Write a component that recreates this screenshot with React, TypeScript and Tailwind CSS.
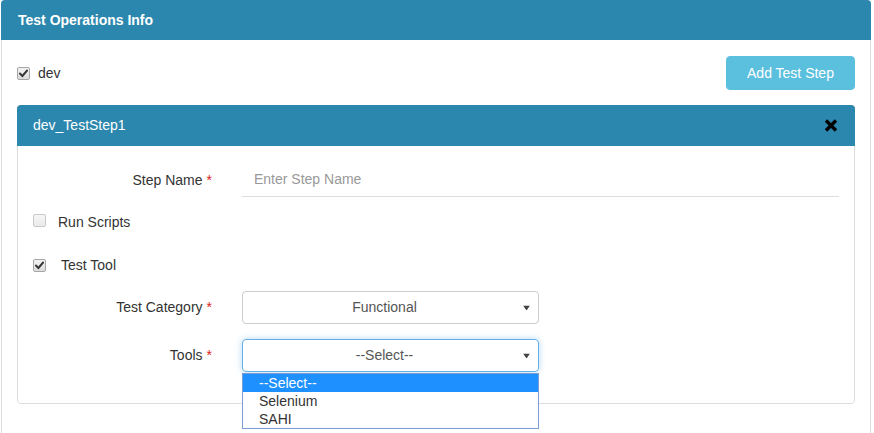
import React from "react";

const Check = ({ checked }: { checked: boolean }) => (
  <span className="inline-flex h-[13px] w-[13px] items-center justify-center rounded-[2px] border border-[#a6a6a6] bg-gradient-to-b from-[#f2f2f2] to-[#dcdcdc]">
    {checked && (
      <svg width="9" height="9" viewBox="0 0 9 9">
        <path d="M1 4.6 L3.4 7 L8 1.6" stroke="#333" strokeWidth="2" fill="none" strokeLinecap="square" />
      </svg>
    )}
  </span>
);

const Arrow = () => (
  <svg width="7" height="5" viewBox="0 0 7 5" className="absolute right-[8px] top-1/2 -translate-y-1/2">
    <path d="M0 0 L7 0 L3.5 5 Z" fill="#444" />
  </svg>
);

const Req = () => <span className="ml-[4px] text-[#e02020]">*</span>;

export default function App() {
  return (
    <div className="min-h-[433px] bg-white pl-px text-[14px] text-[#333]" style={{ fontFamily: '"Liberation Sans", Arial, sans-serif' }}>
      <div className="w-[870px] rounded-t-[4px] border border-t-0 border-[#ddd]">
        <div className="-mx-px flex h-[40px] items-center rounded-t-[4px] bg-[#2b87ad] pl-[17px] font-bold text-white">
          Test Operations Info
        </div>
        <div className="px-[15px] pt-[16px]">
          <div className="flex h-[34px] items-center justify-between">
            <div className="flex items-center">
              <Check checked />
              <span className="ml-[8px]">dev</span>
            </div>
            <button className="h-[34px] w-[129px] rounded-[4px] border border-[#5bc0de] bg-[#5bc0de] text-white">
              Add Test Step
            </button>
          </div>
          <div className="mt-[15px] rounded-[4px] border border-[#ddd]">
            <div className="-mx-px -mt-px flex h-[41px] items-center justify-between rounded-t-[4px] bg-[#2b87ad] pl-[16px] pr-[17px] text-white">
              <span>dev_TestStep1</span>
              <svg width="14" height="13" viewBox="0 0 14 13">
                <path d="M2 1.5 L12 11.5 M12 1.5 L2 11.5" stroke="#000" strokeWidth="3.4" strokeLinecap="butt" />
              </svg>
            </div>
            <div className="px-[15px] pb-[31px] pt-[17px]">
              <div className="flex h-[34px] items-center">
                <label className="w-[179px] text-right">
                  Step Name<Req />
                </label>
                <div className="ml-[30px] flex h-[34px] flex-1 items-center border-b border-[#ddd] pl-[12px] text-[#999]">
                  Enter Step Name
                </div>
              </div>
              <div className="mt-[14px] flex h-[22px] items-center">
                <span className="opacity-60">
                  <Check checked={false} />
                </span>
                <span className="ml-[12px]">Run Scripts</span>
              </div>
              <div className="mt-[21px] flex h-[22px] items-center">
                <Check checked />
                <span className="ml-[15px]">Test Tool</span>
              </div>
              <div className="mt-[15px] flex h-[33px] items-center">
                <label className="w-[179px] text-right">
                  Test Category<Req />
                </label>
                <div className="relative ml-[30px] flex h-[33px] w-[297px] items-center justify-center rounded-[4px] border border-[#ccc] pr-[12px] text-[#555]">
                  Functional
                  <Arrow />
                </div>
              </div>
              <div className="mt-[15px] flex h-[33px] items-center">
                <label className="w-[179px] text-right">
                  Tools<Req />
                </label>
                <div className="relative ml-[30px] h-[33px] w-[297px]">
                  <div className="relative flex h-[33px] w-[297px] items-center justify-center rounded-[4px] border border-[#66afe9] pr-[12px] text-[#555] shadow-[0_0_6px_rgba(102,175,233,0.5)]">
                    --Select--
                    <Arrow />
                  </div>
                  <div className="absolute left-0 top-[34px] z-10 w-[297px] border border-[#7a9cd3] bg-white text-[#333]">
                    <div className="h-[18px] bg-[#1e90ff] pl-[16px] leading-[18px] text-white">--Select--</div>
                    <div className="h-[18px] pl-[16px] leading-[18px]">Selenium</div>
                    <div className="h-[18px] pl-[16px] leading-[18px]">SAHI</div>
                  </div>
                </div>
              </div>
            </div>
          </div>
          <div className="h-[40px]" />
        </div>
      </div>
    </div>
  );
}
